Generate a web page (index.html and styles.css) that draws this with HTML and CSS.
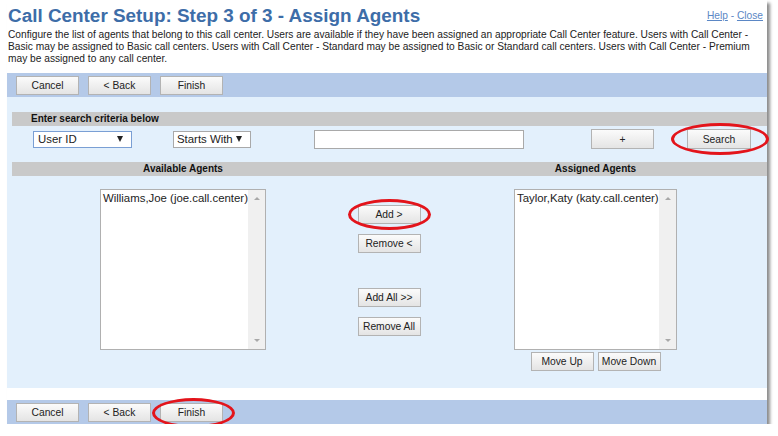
FILE: index.html
```html
<!DOCTYPE html>
<html lang="en">
<head>
    <meta charset="UTF-8">
    <title>Call Center Setup: Step 3 of 3 - Assign Agents</title>
    <link rel="stylesheet" href="styles.css">
</head>
<body>
    <div class="page">
        <div class="head">
            <h1 class="title">Call Center Setup: Step 3 of 3 - Assign Agents</h1>
            <div class="links"><a href="#">Help</a> - <a href="#">Close</a></div>
        </div>
        <p class="intro">Configure the list of agents that belong to this call center. Users are available if they have been assigned an appropriate Call Center feature. Users with Call Center - Basic may be assigned to Basic call centers. Users with Call Center - Standard may be assigned to Basic or Standard call centers. Users with Call Center - Premium may be assigned to any call center.</p>

        <div class="toolbar">
            <button class="btn">Cancel</button>
            <button class="btn">&lt; Back</button>
            <button class="btn">Finish</button>
        </div>

        <div class="panel">
            <div class="bar bar-search">Enter search criteria below</div>
            <div class="search-row">
                <div class="select select-field focused"><span>User ID</span><span class="caret"></span></div>
                <div class="select select-mode"><span>Starts With</span><span class="caret"></span></div>
                <input type="text" class="search-text">
                <button class="btn btn-plus">+</button>
                <span class="circled circled-search"><button class="btn">Search</button></span>
            </div>

            <div class="bar cols">
                <div class="col col-side">Available Agents</div>
                <div class="col col-mid"></div>
                <div class="col col-side">Assigned Agents</div>
            </div>

            <div class="cols agents">
                <div class="col col-side">
                    <div class="list list-left">
                        <div class="items"><div class="item">Williams,Joe (joe.call.center)</div></div>
                        <div class="scroll"><span class="up"></span><span class="down"></span></div>
                    </div>
                </div>
                <div class="col col-mid moves">
                    <span class="circled circled-add"><button class="btn">Add &gt;</button></span>
                    <button class="btn">Remove &lt;</button>
                    <button class="btn btn-addall">Add All &gt;&gt;</button>
                    <button class="btn">Remove All</button>
                </div>
                <div class="col col-side">
                    <div class="list list-right">
                        <div class="items"><div class="item">Taylor,Katy (katy.call.center)</div></div>
                        <div class="scroll"><span class="up"></span><span class="down"></span></div>
                    </div>
                    <div class="order">
                        <button class="btn">Move Up</button>
                        <button class="btn">Move Down</button>
                    </div>
                </div>
            </div>
        </div>

        <div class="toolbar toolbar-bottom">
            <button class="btn">Cancel</button>
            <button class="btn">&lt; Back</button>
            <span class="circled circled-finish"><button class="btn">Finish</button></span>
        </div>
    </div>
</body>
</html>
```

FILE: styles.css
```css
body {
    margin: 0;
    background-color: #fff;
    font-family: 'Liberation Sans', Arial, sans-serif;
    color: #222;
}
.page {
    width: 760px;
    height: 424px;
    margin-left: 7px;
    background-color: #fff;
    box-shadow: 3px 3px 3px rgba(0, 0, 0, 0.45);
}
.head {
    display: flex;
    justify-content: space-between;
    align-items: flex-start;
    padding: 4px 4px 0 1px;
}
.title {
    margin: 0;
    font-size: 18.9px;
    line-height: 24px;
    font-weight: bold;
    color: #3d6da8;
}
.links {
    font-size: 10.2px;
    line-height: 14px;
    margin-top: 5px;
    color: #5b87c5;
}
.links a {
    color: #5b87c5;
}
.intro {
    margin: 1px 0 0 1px;
    width: 756px;
    font-size: 10.2px;
    line-height: 12px;
    color: #222;
}
.toolbar {
    display: flex;
    align-items: center;
    gap: 9px;
    height: 24px;
    margin-top: 8px;
    padding-left: 9px;
    background-color: #b4c9e8;
}
.toolbar-bottom {
    margin-top: 12px;
}
.btn {
    width: 63px;
    height: 19px;
    padding: 0;
    border: 1px solid #b3b3b3;
    background: linear-gradient(#fbfbfb, #e4e4e4);
    font-family: 'Liberation Sans', Arial, sans-serif;
    font-size: 10.3px;
    color: #222;
}
.panel {
    box-sizing: border-box;
    height: 291px;
    padding: 15px 0 0 5px;
    background-color: #e3f0fc;
}
.bar {
    height: 14px;
    background-color: #c9c9c9;
    font-size: 10px;
    font-weight: bold;
    line-height: 14px;
    color: #111;
}
.bar-search {
    padding-left: 19px;
}
.search-row {
    display: flex;
    align-items: center;
    height: 20px;
    margin: 3px 0 13px;
}
.select {
    box-sizing: border-box;
    display: flex;
    justify-content: space-between;
    align-items: center;
    height: 17px;
    padding: 0 8px 0 4px;
    border: 1px solid #a9a9a9;
    background-color: #fff;
    font-size: 11.4px;
}
.select.focused {
    border-color: #7a9fd4;
}
.select-field {
    width: 99px;
    margin-left: 21px;
}
.select-mode {
    width: 78px;
    margin-left: 41px;
    padding-left: 3px;
}
.caret {
    width: 0;
    height: 0;
    border-left: 3px solid transparent;
    border-right: 3px solid transparent;
    border-top: 6px solid #222;
}
.search-text {
    box-sizing: border-box;
    width: 210px;
    height: 19px;
    margin: 0 0 0 63px;
    border: 1px solid #a9a9a9;
    background-color: #fff;
}
.btn-plus {
    height: 20px;
    margin-left: 67px;
}
.circled {
    position: relative;
    display: inline-flex;
}
.circled::after {
    content: '';
    position: absolute;
    border: 3px solid #e3141b;
    border-radius: 50%;
}
.circled-search {
    margin-left: 33px;
}
.circled-search .btn {
    width: 64px;
    height: 20px;
}
.circled-search::after {
    top: -6px;
    bottom: -6px;
    left: -16px;
    right: -18px;
}
.circled-add::after {
    top: -6px;
    bottom: -6px;
    left: -10px;
    right: -10px;
}
.circled-finish::after {
    top: -5px;
    bottom: -6px;
    left: -8px;
    right: -12px;
}
.cols {
    display: flex;
}
.col-side {
    flex: 0 0 342px;
    display: flex;
    flex-direction: column;
    align-items: center;
}
.col-side:last-child {
    flex-basis: 343px;
}
.col-mid {
    flex: 0 0 70px;
}
.agents {
    margin-top: 13px;
}
.list {
    box-sizing: border-box;
    display: flex;
    height: 161px;
    border: 1px solid #b0b0b0;
    background-color: #fff;
}
.list-left {
    width: 166px;
}
.list-right {
    width: 163px;
}
.items {
    flex: 1;
    padding: 1px 2px;
    overflow: hidden;
}
.item {
    font-size: 11.4px;
    line-height: 14px;
    white-space: nowrap;
    color: #222;
}
.scroll {
    display: flex;
    flex-direction: column;
    justify-content: space-between;
    align-items: center;
    flex: 0 0 17px;
    background-color: #f0f0f0;
}
.scroll span {
    width: 0;
    height: 0;
    margin: 7px 0;
    border-left: 3px solid transparent;
    border-right: 3px solid transparent;
}
.scroll .up {
    border-bottom: 3px solid #a8a8a8;
}
.scroll .down {
    border-top: 3px solid #a8a8a8;
}
.moves {
    display: flex;
    flex-direction: column;
    align-items: center;
    padding-top: 16px;
}
.moves .btn {
    margin-top: 10px;
}
.moves .circled .btn {
    margin-top: 0;
}
.moves .btn-addall {
    margin-top: 35px;
}
.order {
    display: flex;
    gap: 4px;
    margin-top: 2px;
}
```
